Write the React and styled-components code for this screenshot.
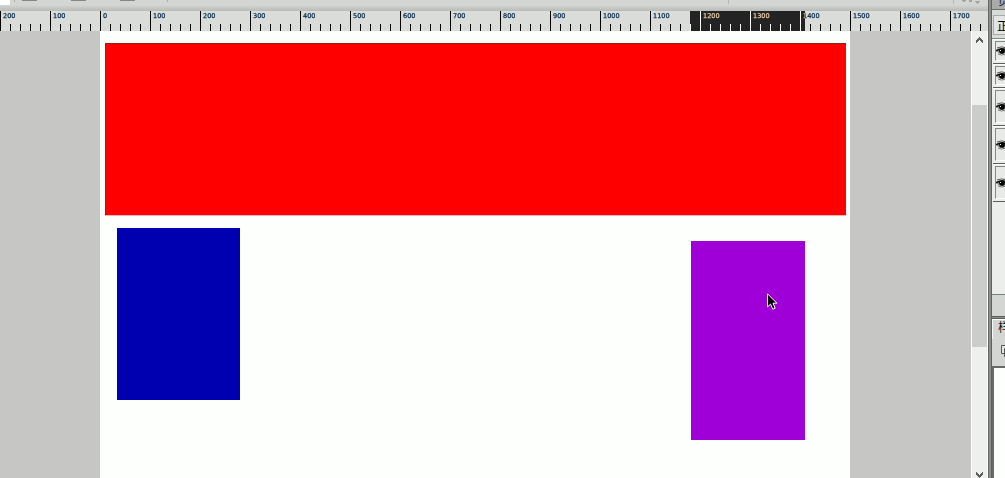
import React from "react";
import styled, { createGlobalStyle } from "styled-components";

const Global = createGlobalStyle`
  * { box-sizing: border-box; }
  body { margin: 0; overflow: hidden; background: #d3d5d2; font-family: "Liberation Sans", "Noto Sans CJK SC", sans-serif; }
`;
const Shell = styled.div`
  display: flex;
  width: 1005px;
  height: 478px;
  overflow: hidden;
`;
const Editor = styled.main`
  display: flex;
  flex-direction: column;
  width: 988px;
  flex: none;
`;
const Toolbar = styled.header`
  display: flex;
  justify-content: space-between;
  height: 11px;
  flex: none;
  padding-right: 8px;
  background: linear-gradient(#d4d6d3 0 5px, #b8bab7 11px);
`;
const ToolGroup = styled.div`
  display: flex;
`;
const Field = styled.div`
  width: 10px;
  height: 5px;
  background: #fdfffd;
`;
const Separator = styled.div`
  width: 1px;
  height: ${(p) => p.$h}px;
  background: #acaeab;
`;
const ToolButtons = styled.div`
  display: flex;
  gap: 34px;
  padding: 0 32px 0 7px;
`;
const ToolButton = styled.div`
  width: 15px;
  height: 1px;
  background: #858784;
`;
const Ruler = styled.div`
  position: relative;
  display: flex;
  height: 20px;
  flex: none;
  overflow: hidden;
  background: #dadcda;
  isolation: isolate;
`;
const Segment = styled.div`
  width: 50px;
  height: 20px;
  flex: none;
  padding: 1px 0 0 2px;
  border-left: 1px solid #000;
  background: repeating-linear-gradient(90deg, transparent 0 9px, #000 9px 10px) 0 13px / 49px 7px no-repeat;
  font: 6.5px/9px "DejaVu Sans", sans-serif;
  -webkit-text-stroke: 0.25px #06294a;
  color: #06294a;
`;
const Selection = styled.div`
  position: absolute;
  left: 690px;
  top: 0;
  width: 115px;
  height: 20px;
  background: #fcfffc;
  mix-blend-mode: difference;
`;
const Work = styled.div`
  display: flex;
  flex: 1;
`;
const Pasteboard = styled.div`
  width: 971px;
  padding-left: 100px;
  background: #c6c7c5;
`;
const Artboard = styled.div`
  position: relative;
  width: 750px;
  height: 447px;
  background: #fdfffd;
`;
const Shape = styled.div`
  position: absolute;
  left: ${(p) => p.$x}px;
  top: ${(p) => p.$y}px;
  width: ${(p) => p.$w}px;
  height: ${(p) => p.$h}px;
  background: ${(p) => p.$c};
  box-shadow: ${(p) => (p.$edge ? "inset 1px 1px #8c2418, 0 1px #f6b4ae" : "none")};
`;
const Pointer = styled.svg`
  position: absolute;
  left: 667px;
  top: 262px;
`;
const Scrollbar = styled.div`
  display: flex;
  flex-direction: column;
  width: 17px;
  border-left: 1px solid #fff;
  border-right: 1px solid #fff;
  background: #eef0ee;
`;
const ArrowBox = styled.div`
  height: ${(p) => p.$h}px;
  padding: ${(p) => p.$top}px 0 0 4px;
  line-height: 0;
`;
const Thumb = styled.div`
  height: 242px;
  background: #cbcdca;
`;
const Track = styled.div`
  flex: 1;
`;
const Divider = styled.div`
  width: 4px;
  flex: none;
  background: linear-gradient(90deg, #656765 0 1px, #8c8e8b 1px 3px, #5f615f 3px);
`;
const Side = styled.aside`
  width: 13px;
  flex: none;
  overflow: hidden;
  background: #d4d6d3;
`;
const Tab = styled.div`
  height: 10px;
  padding-left: 6px;
  background: #a9aba8;
  border-bottom: 1px solid #6c6e6b;
  overflow: hidden;
  font-size: 12px;
  line-height: 3px;
  color: #15244c;
`;
const ModeRow = styled.div`
  height: 29px;
  padding: 5px 0 0 1px;
  border-bottom: 1px solid #7d8994;
  background: #d9dbd8;
`;
const Mode = styled.div`
  width: 40px;
  height: 20px;
  padding-left: 3px;
  border: 1px solid #a6a8a5;
  background: #e3e5e2;
  font: 12px/20px "Noto Sans CJK SC", sans-serif;
  color: #000;
`;
const Layers = styled.div`
  height: 256px;
  padding-left: 1px;
  border-bottom: 1px solid #758089;
  background: #eceeeb;
`;
const Layer = styled.div`
  height: ${(p) => p.$h}px;
  padding: 1px 0 2px 2px;
  border-top: 1px solid #fff;
  border-bottom: 1px solid #5c5e5b;
`;
const EyeCell = styled.div`
  display: flex;
  align-items: center;
  width: 22px;
  height: 100%;
  border: 1px solid #858784;
  border-bottom-color: #fff;
  background: #e8eae7;
`;
const Footer = styled.div`
  height: 21px;
  background: #d4d6d3;
`;
const Gap = styled.div`
  height: 4px;
  background: linear-gradient(#5f615f 0 1px, #8c8e8b 1px 2px, #5f615f 2px 3px, #fff 3px);
`;
const StyleHead = styled.div`
  height: 19px;
  padding: 0 0 0 5px;
  border-left: 1px solid #f7f8f7;
  font: 12px/13px "Noto Sans CJK SC", sans-serif;
  white-space: nowrap;
  color: #181818;
`;
const StyleTools = styled.div`
  height: 27px;
  padding: 6px 0 0 9px;
  line-height: 0;
`;
const StyleBox = styled.div`
  height: 120px;
  background: #fdfffd;
  border-top: 2px solid #686a67;
  border-left: 2px solid #686a67;
`;

const Chevron = ({ down }) => (
  <svg width="8" height="6" viewBox="0 0 8 6" shapeRendering="crispEdges">
    <path
      transform={down ? "matrix(1 0 0 -1 0 6)" : undefined}
      d="M3 0h1v1h1v1h1v1h1v3h-1v-1h-1v-1h-1v-1h-1v1h-1v1h-1v1h-1v-3h1v-1h1v-1h1z"
      fill="#5c5e5c"
    />
  </svg>
);
const Eye = () => (
  <svg width="12" height="10" viewBox="0 0 12 10">
    <path d="M1 2Q5-.2 11 2" fill="none" stroke="#555" />
    <path d="M0 4Q5 .5 12 4Q11 8 6 8Q2 8 0 4" fill="#8d8f8c" />
    <path d="M0 5Q4 1.5 12 4" fill="none" stroke="#111" strokeWidth="1.4" />
    <circle cx="6" cy="5" r="2.8" fill="#000" />
    <path d="M4 4h1v1H4z" fill="#fff" />
    <path d="M2 8Q5 10 10 8" fill="none" stroke="#777" />
  </svg>
);

const marks = [200, 100, ...Array.from({ length: 18 }, (_, i) => i * 100)];
const layers = [25, 24, 38, 38, 38];

export default function App() {
  return (
    <>
      <Global />
      <Shell>
        <Editor>
          <Toolbar>
            <ToolGroup>
              <Field />
              <svg width="4" height="1" />
              <Separator $h={2} />
              <ToolButtons>
                <ToolButton />
                <ToolButton />
                <ToolButton />
              </ToolButtons>
              <Separator $h={2} />
            </ToolGroup>
            <svg width="252" height="5" viewBox="0 0 252 5" shapeRendering="crispEdges">
              <path d="M0 0h1v4H0zM225 0h1v4h-1z" fill="#b4b6b3" />
              <path d="M234 0h4v1h-1v1h-2v-1h-1zM241 0h3v2h-3zM247 1h5v1h-1v1h-1v1h-1v-1h-1v-1h-1z" fill="#a2a4a1" />
            </svg>
          </Toolbar>
          <Ruler>
            {marks.map((m, i) => <Segment key={i}>{m}</Segment>)}
            <Selection />
          </Ruler>
          <Work>
            <Pasteboard>
              <Artboard>
                <Shape $x={5} $y={12} $w={741} $h={172} $c="#ff0000" $edge />
                <Shape $x={17} $y={197} $w={123} $h={172} $c="#0000b0" />
                <Shape $x={591} $y={210} $w={114} $h={199} $c="#a000d8" />
                <Pointer width="11" height="18" viewBox="0 0 11 18">
                  <path d="M.5 .8V13.8L3.6 11.2L5.8 16.3L8.2 15.2L6 10.2H9.9Z" fill="#000" stroke="#fff" />
                </Pointer>
              </Artboard>
            </Pasteboard>
            <Scrollbar>
              <ArrowBox $h={74} $top={6}><Chevron /></ArrowBox>
              <Thumb />
              <Track />
              <ArrowBox $h={6} $top={0}><Chevron down /></ArrowBox>
            </Scrollbar>
          </Work>
        </Editor>
        <Divider />
        <Side>
          <Tab>员</Tab>
          <ModeRow><Mode>正</Mode></ModeRow>
          <Layers>
            {layers.map((h, i) => <Layer key={i} $h={h}><EyeCell><Eye /></EyeCell></Layer>)}
          </Layers>
          <Footer />
          <Gap />
          <StyleHead>样</StyleHead>
          <StyleTools>
            <svg width="10" height="12" viewBox="0 0 10 12">
              <path d="M.5 .5h6v8h-6zM3.5 3.5h6v8h-6z" fill="#e5e7e4" stroke="#555" />
            </svg>
          </StyleTools>
          <StyleBox />
        </Side>
      </Shell>
    </>
  );
}
